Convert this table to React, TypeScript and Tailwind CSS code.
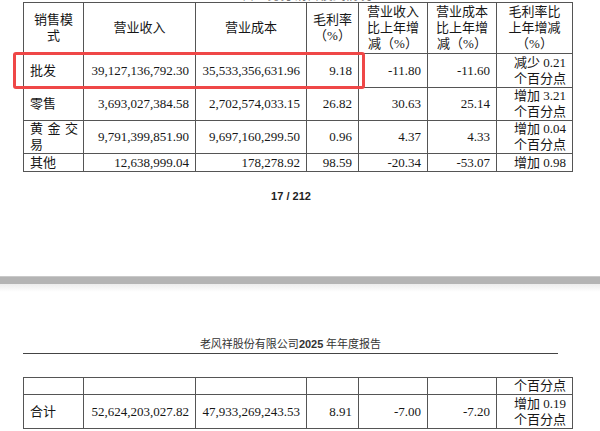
import React from 'react';

type Row = {
  mode: string;
  rev: string;
  cost: string;
  margin: string;
  revYoy: string;
  costYoy: string;
  change: string[];
  h: string;
  justify?: boolean;
};

const rows: Row[] = [
  { mode: '批发', rev: '39,127,136,792.30', cost: '35,533,356,631.96', margin: '9.18', revYoy: '-11.80', costYoy: '-11.60', change: ['减少 0.21', '个百分点'], h: 'h-[34px]' },
  { mode: '零售', rev: '3,693,027,384.58', cost: '2,702,574,033.15', margin: '26.82', revYoy: '30.63', costYoy: '25.14', change: ['增加 3.21', '个百分点'], h: 'h-[33px]' },
  { mode: '黄金交易', rev: '9,791,399,851.90', cost: '9,697,160,299.50', margin: '0.96', revYoy: '4.37', costYoy: '4.33', change: ['增加 0.04', '个百分点'], h: 'h-[33px]', justify: true },
  { mode: '其他', rev: '12,638,999.04', cost: '178,278.92', margin: '98.59', revYoy: '-20.34', costYoy: '-53.07', change: ['增加 0.98'], h: 'h-[18px]' },
];

const cell = 'border border-[#555] p-0 align-middle';
const num = `${cell} text-right pr-[6px]`;

function Cols() {
  return (
    <colgroup>
      <col className="w-[60px]" />
      <col className="w-[112px]" />
      <col className="w-[111px]" />
      <col className="w-[52px]" />
      <col className="w-[69px]" />
      <col className="w-[69px]" />
      <col className="w-[76px]" />
    </colgroup>
  );
}

export default function App() {
  return (
    <div
      className="relative w-[600px] h-[431px] overflow-hidden bg-white text-[#161616] text-[13px] leading-[16px]"
      style={{ fontFamily: '"Liberation Serif", "Noto Sans CJK SC", serif' }}
    >
      {/* tail of the caption above the table */}
      <div className="h-[2px] overflow-hidden flex items-end justify-center text-[#777]">
        <span className="leading-[14px]">主营业务分销售模式情况</span>
      </div>

      {/* Page 17 table */}
      <div className="px-[23px]">
        <table className="table-fixed border-collapse w-[549px]">
          <Cols />
          <thead>
            <tr className="h-[51px]">
              <th className={`${cell} font-normal text-center px-[5px]`}>销售模式</th>
              <th className={`${cell} font-normal text-center`}>营业收入</th>
              <th className={`${cell} font-normal text-center`}>营业成本</th>
              <th className={`${cell} font-normal text-center`}>
                毛利率
                <br />
                （%）
              </th>
              <th className={`${cell} font-normal text-center`}>
                营业收入
                <br />
                比上年增
                <br />
                减（%）
              </th>
              <th className={`${cell} font-normal text-center`}>
                营业成本
                <br />
                比上年增
                <br />
                减（%）
              </th>
              <th className={`${cell} font-normal text-center`}>
                毛利率比
                <br />
                上年增减
                <br />
                （%）
              </th>
            </tr>
          </thead>
          <tbody>
            {rows.map((r) => (
              <tr key={r.mode} className={r.h}>
                <td className={`${cell} pl-[6px] pr-[5px] ${r.justify ? 'text-justify' : 'text-left'}`}>{r.mode}</td>
                <td className={num}>{r.rev}</td>
                <td className={num}>{r.cost}</td>
                <td className={num}>{r.margin}</td>
                <td className={num}>{r.revYoy}</td>
                <td className={num}>{r.costYoy}</td>
                <td className={num}>
                  {r.change.map((c, i) => (
                    <div key={i}>{c}</div>
                  ))}
                </td>
              </tr>
            ))}
          </tbody>
        </table>
      </div>

      {/* page number */}
      <div
        className="mt-[17px] text-center text-[11px] leading-[14px] font-bold text-[#222] pr-[18px]"
        style={{ fontFamily: '"Liberation Sans", Arial, sans-serif' }}
      >
        17 / 212
      </div>

      {/* page break */}
      <div className="mt-[73px]">
        <div className="h-px bg-[#c9c9c9]" />
        <div className="h-[7px] bg-[#b4b4b4]" />
        <div className="h-[8px] bg-gradient-to-b from-[#ececec] to-white" />
      </div>

      {/* running header */}
      <div className="mx-[23px] w-[535px] mt-[45px] border-b border-[#444] pb-[2px] text-center text-[11px] leading-[14px] text-[#333]">
        老风祥股份有限公司
        <span className="font-bold" style={{ fontFamily: '"Liberation Sans", Arial, sans-serif' }}>
          2025
        </span>{' '}
        年年度报告
      </div>

      {/* Page 18 table */}
      <div className="px-[23px] mt-[23px]">
        <table className="table-fixed border-collapse w-[549px]">
          <Cols />
          <tbody>
            <tr className="h-[17px]">
              <td className={cell} />
              <td className={cell} />
              <td className={cell} />
              <td className={cell} />
              <td className={cell} />
              <td className={cell} />
              <td className={num}>个百分点</td>
            </tr>
            <tr className="h-[34px]">
              <td className={`${cell} pl-[6px] text-left`}>合计</td>
              <td className={num}>52,624,203,027.82</td>
              <td className={num}>47,933,269,243.53</td>
              <td className={num}>8.91</td>
              <td className={num}>-7.00</td>
              <td className={num}>-7.20</td>
              <td className={num}>
                <div>增加 0.19</div>
                <div>个百分点</div>
              </td>
            </tr>
          </tbody>
        </table>
        <p className="mt-[3px] pl-[2px]">主营业务分行业、分产品、分地区、分销售模式情况的说明</p>
      </div>

      {/* highlight */}
      <div className="absolute left-[13px] top-[52px] w-[352px] h-[37px] border-[3px] border-[#ef4747] rounded-[3px]" />
    </div>
  );
}
